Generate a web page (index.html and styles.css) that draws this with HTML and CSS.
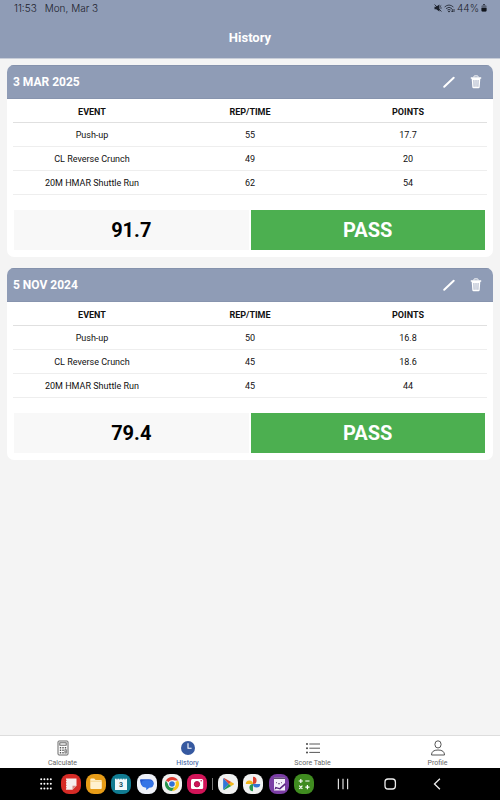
FILE: index.html
```html
<!DOCTYPE html>
<html lang="en">
<head>
<meta charset="utf-8">
<meta name="viewport" content="width=device-width, initial-scale=1">
<title>History</title>
<link rel="stylesheet" href="styles.css">
</head>
<body>
<svg class="defs" aria-hidden="true">
  <symbol id="pencil" viewBox="0 0 14 14"><path d="M2.2 11.8L11.7 2.7" stroke="#fff" stroke-width="2" stroke-linecap="round"/></symbol>
  <symbol id="trash" viewBox="0 0 14 14"><path d="M4.9 2.4V1.6q0-.7.7-.7h2.8q.7 0 .7.7v.8" fill="none" stroke="#fff" stroke-width="1"/><path d="M1.8 2.2h10.4v1.6H1.8zM2.7 3.8h8.6l-.6 8.2q-.1 1.2-1.2 1.2h-5q-1.1 0-1.2-1.2z" fill="#fff"/><path d="M4.9 5l.2 6.8M7 5v6.8M9.1 5l-.2 6.8" stroke="#8f9cb6" stroke-width=".8"/></symbol>
</svg>

<header class="app-header">
  <div class="status">
    <span>11:53</span><span>Mon, Mar 3</span>
    <span class="status-icons">
      <svg width="8" height="8" viewBox="0 0 8 8"><path d="M.5 2.7h1.7L5.4.4v7.2L2.2 5.3H.5z" fill="#1c212c"/><path d="M.6.5l6.8 7M6 2.6l1.2-1.1M6.2 4h1.5" stroke="#1c212c" stroke-width=".9"/></svg>
      <svg width="11" height="9" viewBox="0 0 11 9" fill="none" stroke="#1c212c" stroke-width=".8"><path d="M.6 3Q5 -.9 9.4 3M2 4.6q3-2.7 6 0M3.4 6.1q1.6-1.4 3.2 0"/><circle cx="5" cy="7.5" r=".5" fill="#1c212c"/><path d="M8.3 5v3M7.5 7.2l.8.8.7-.8M10 8V5"/></svg>
      <span>44%</span>
      <svg width="6" height="8" viewBox="0 0 6 8"><path d="M2 .3h2v1H2z" fill="#1c212c"/><rect x=".5" y="1.2" width="5" height="6.4" rx="1" fill="#5b6477"/><path d="M.5 4h5v2.6q0 1-1 1h-3q-1 0-1-1z" fill="#11151d"/></svg>
    </span>
  </div>
  <h1>History</h1>
</header>

<main class="history">
  <section class="card">
    <div class="card-head">
      <h2>3 MAR 2025</h2>
      <button type="button" aria-label="Edit"><svg class="icon"><use href="#pencil"/></svg></button>
      <button type="button" aria-label="Delete"><svg class="icon"><use href="#trash"/></svg></button>
    </div>
    <div class="card-body">
      <table>
        <thead><tr><th scope="col">EVENT</th><th scope="col">REP/TIME</th><th scope="col">POINTS</th></tr></thead>
        <tbody>
          <tr><td>Push-up</td><td>55</td><td>17.7</td></tr>
          <tr><td>CL Reverse Crunch</td><td>49</td><td>20</td></tr>
          <tr><td>20M HMAR Shuttle Run</td><td>62</td><td>54</td></tr>
        </tbody>
      </table>
      <div class="result"><div class="score">91.7</div><div class="verdict">PASS</div></div>
    </div>
  </section>

  <section class="card">
    <div class="card-head">
      <h2>5 NOV 2024</h2>
      <button type="button" aria-label="Edit"><svg class="icon"><use href="#pencil"/></svg></button>
      <button type="button" aria-label="Delete"><svg class="icon"><use href="#trash"/></svg></button>
    </div>
    <div class="card-body">
      <table>
        <thead><tr><th scope="col">EVENT</th><th scope="col">REP/TIME</th><th scope="col">POINTS</th></tr></thead>
        <tbody>
          <tr><td>Push-up</td><td>50</td><td>16.8</td></tr>
          <tr><td>CL Reverse Crunch</td><td>45</td><td>18.6</td></tr>
          <tr><td>20M HMAR Shuttle Run</td><td>45</td><td>44</td></tr>
        </tbody>
      </table>
      <div class="result"><div class="score">79.4</div><div class="verdict">PASS</div></div>
    </div>
  </section>
</main>

<nav class="tabs">
  <a href="#calculate">
    <svg viewBox="0 0 16 16" fill="none" stroke="#555" stroke-width=".9"><rect x="3" y="1" width="10" height="14" rx="1"/><rect x="4.8" y="2.8" width="6.4" height="2.4"/><path d="M4.8 7.7h1.4M7.3 7.7h1.4M9.8 7.7h1.4M4.8 10.2h1.4M7.3 10.2h1.4M4.8 12.7h1.4M7.3 12.7h1.4" stroke-width="1.4"/><rect x="10" y="9.8" width="1.2" height="3.2"/></svg>
    <span>Calculate</span>
  </a>
  <a href="#history" class="active" aria-current="page">
    <svg viewBox="0 0 16 16"><circle cx="8" cy="8" r="7" fill="#3659a0"/><path d="M8 3.3v5h3.6" fill="none" stroke="#fff" stroke-width="1.1"/></svg>
    <span>History</span>
  </a>
  <a href="#scores">
    <svg viewBox="0 0 16 16" fill="none" stroke="#444"><path d="M4.3 4H15M4.3 8.2H15M4.3 12.4H15" stroke-width=".9"/><g fill="#444" stroke="none"><circle cx="2" cy="4" r="1"/><circle cx="2" cy="8.2" r="1"/><circle cx="2" cy="12.4" r="1"/></g></svg>
    <span>Score Table</span>
  </a>
  <a href="#profile">
    <svg viewBox="0 0 16 16" fill="none" stroke="#444" stroke-width=".9"><ellipse cx="8" cy="4.4" rx="3.1" ry="3.6"/><path d="M1.5 15q0-5 6.5-5t6.5 5z" stroke-linejoin="round"/></svg>
    <span>Profile</span>
  </a>
</nav>

<footer class="dock">
  <div class="apps pinned">
    <button type="button" aria-label="All apps"><svg viewBox="0 0 20 20" fill="#fff"><circle cx="5.2" cy="5.2" r="1"/><circle cx="8.4" cy="5.2" r="1"/><circle cx="11.6" cy="5.2" r="1"/><circle cx="14.8" cy="5.2" r="1"/><circle cx="5.2" cy="9.8" r="1"/><circle cx="8.4" cy="9.8" r="1"/><circle cx="11.6" cy="9.8" r="1"/><circle cx="14.8" cy="9.8" r="1"/><circle cx="5.2" cy="14.4" r="1"/><circle cx="8.4" cy="14.4" r="1"/><circle cx="11.6" cy="14.4" r="1"/><circle cx="14.8" cy="14.4" r="1"/></svg></button>
    <button type="button" aria-label="Notes"><svg viewBox="0 0 20 20"><rect width="20" height="20" rx="8" fill="#d62b26"/><path d="M5 4.5h10.5v7.2l-4 4H5z" fill="#f5eeee"/><path d="M15.5 11.7h-4v4z" fill="#d98a87"/><path d="M4 6.3h1.8M4 8.8h1.8M4 11.3h1.8M4 13.8h1.8" stroke="#d62b26" stroke-width=".7"/></svg></button>
    <button type="button" aria-label="Files"><svg viewBox="0 0 20 20"><rect width="20" height="20" rx="8" fill="#e79c17"/><path d="M4.3 5.5q0-.9.9-.9h3l1.4 1.5h5.2q1 0 1 1v7q0 1-1 1H5.2q-.9 0-.9-1z" fill="#fff1cf"/><path d="M4.3 7.2h11.5" stroke="#f0c970" stroke-width=".7"/></svg></button>
    <button type="button" aria-label="Calendar"><svg viewBox="0 0 20 20"><rect width="20" height="20" rx="8" fill="#117c92"/><path d="M4 4.7h12v11.3H4z" fill="#f1f8fa"/><path d="M6 4v1.6M8.7 4v1.6M11.3 4v1.6M14 4v1.6" stroke="#117c92" stroke-width=".8"/><text x="10" y="13.3" text-anchor="middle" class="calendar-day">3</text></svg></button>
    <button type="button" aria-label="Messages"><svg viewBox="0 0 20 20"><rect width="20" height="20" rx="8" fill="#eef1f8"/><path d="M3 6q0-.8.9-.8H12q4.6.2 4.6 4.2 0 3.7-4.2 3.8H8.2Q3.6 12.8 3 6z" fill="#2358cf"/><path d="M4.4 9.2q.3-3 4.2-3h3.8q4 .1 4 3.7t-3.8 3.7l-2.8 2.2q-.6.3-.6-.4v-1.8q-4.9-.3-4.8-4.4z" fill="#3474e6"/></svg></button>
    <button type="button" aria-label="Chrome"><svg viewBox="0 0 20 20"><rect width="20" height="20" rx="8" fill="#f0f0f0"/><path d="M10 10L3.9 6.5A7 7 0 0 1 16.1 6.5H10z" fill="#de3b30"/><path d="M10 10l6.1-3.5A7 7 0 0 1 10 17l3-5.2z" fill="#f6c51c"/><path d="M10 10l3 1.8L10 17A7 7 0 0 1 3.9 6.5L7 11.8z" fill="#26924a"/><circle cx="10" cy="10" r="3.7" fill="#fff"/><circle cx="10" cy="10" r="2.8" fill="#2f70d8"/></svg></button>
    <button type="button" aria-label="Camera"><svg viewBox="0 0 20 20"><rect width="20" height="20" rx="8" fill="#d31458"/><rect x="4" y="5" width="12.2" height="10" rx="1.5" fill="#fff"/><circle cx="10" cy="10.2" r="2.7" fill="#d31458" stroke="#ac1850" stroke-width="1"/><circle cx="14.2" cy="6.8" r=".8" fill="#d31458"/></svg></button>
  </div>
  <div class="divider"></div>
  <div class="apps recent">
    <button type="button" aria-label="Play Store"><svg viewBox="0 0 20 20"><rect width="20" height="20" rx="8" fill="#f0f1f1"/><path d="M5.6 4.2L11 10l-5.4 5.8q-.5-.2-.5-1V5q0-.7.5-.8z" fill="#3277d8"/><path d="M5.6 4.2q.4-.2 1 .1l6.7 3.8L11 10.3z" fill="#e34635"/><path d="M5.6 15.8q.4.2 1-.1l6.7-3.8L11 9.7z" fill="#249b58"/><path d="M13.1 8l2.4 1.3q1 .7 0 1.4L13.1 12 11 10z" fill="#f3b91c"/></svg></button>
    <button type="button" aria-label="Photos"><svg viewBox="0 0 20 20"><rect width="20" height="20" rx="8" fill="#f0f1f1"/><path d="M10 2.8V10a3.6 3.6 0 0 0 0-7.2z" fill="#dc4032"/><path d="M17.2 10H10a3.6 3.6 0 0 0 7.2 0z" fill="#3274d3"/><path d="M10 17.2V10a3.6 3.6 0 0 0 0 7.2z" fill="#2b9650"/><path d="M2.8 10H10a3.6 3.6 0 0 0-7.2 0z" fill="#f0b51b"/></svg></button>
    <button type="button" aria-label="Journal"><svg viewBox="0 0 20 20"><rect width="20" height="20" rx="8" fill="#7b3da5"/><rect x="5" y="3.5" width="11" height="13" fill="#f5effa"/><path d="M5 4.2h11" stroke="#3b2352" stroke-width="1.2"/><path d="M7.5 8.2v1M12.5 8.2v1M9 9.5q1 1 2 0" fill="none" stroke="#4b2b62" stroke-width=".8"/><path d="M5.4 15.7l1-3 4.1 1.3 5.2-4.7 1.2 1.3-5.8 5-3.4-1.2z" fill="#5a247f"/></svg></button>
    <button type="button" aria-label="Calculator"><svg viewBox="0 0 20 20"><rect width="20" height="20" rx="8" fill="#408c20"/><path d="M4.7 7h4.2M6.8 4.9v4.2M11.3 7h4.2M5.2 11.6l3.2 3.2M8.4 11.6l-3.2 3.2M11.3 13.2h4.2M13.4 11.1v4.2" stroke="#fff" stroke-width="1.2"/></svg></button>
  </div>
  <div class="system">
    <button type="button" aria-label="Recents"><svg viewBox="0 0 20 20"><path d="M5.4 4.8v10.4M10 4.8v10.4M14.6 4.8v10.4" stroke="#ddd" stroke-width="1.2"/></svg></button>
    <button type="button" aria-label="Home"><svg viewBox="0 0 20 20"><rect x="5" y="5" width="10.4" height="10" rx="3" fill="none" stroke="#eee" stroke-width="1.3"/></svg></button>
    <button type="button" aria-label="Back"><svg viewBox="0 0 20 20"><path d="M12.9 4.8L7.5 10l5.4 5.2" fill="none" stroke="#eee" stroke-width="1.3"/></svg></button>
  </div>
</footer>
</body>
</html>
```
FILE: styles.css
```css
* { box-sizing: border-box; }

body {
  margin: 0;
  min-height: 100vh;
  display: flex;
  flex-direction: column;
  background: #f4f4f4;
  color: #111;
  font-family: Roboto, "Liberation Sans", sans-serif;
}

h1, h2 { margin: 0; }

button {
  padding: 0;
  border: 0;
  background: none;
  display: flex;
}

.defs { display: none; }

.app-header {
  background: #8f9cb6;
  color: #fff;
  padding-bottom: 10px;
  border-bottom: 1px solid #c9ced9;
}

.status {
  display: flex;
  align-items: center;
  gap: 8px;
  height: 16px;
  padding: 0 13px 0 14px;
  color: #1c212c;
  font: 300 10px/16px Inter, Roboto, sans-serif;
}

.status-icons {
  margin-left: auto;
  display: flex;
  align-items: center;
  gap: 2px;
}

h1 {
  padding-top: 12px;
  font-size: 13px;
  line-height: 20px;
  text-align: center;
}

.history {
  flex: 1;
  display: flex;
  flex-direction: column;
  gap: 11px;
  padding: 6px 7px 12px;
}

.card {
  background: #fff;
  border-radius: 7px;
  overflow: hidden;
}

.card-head {
  display: flex;
  align-items: center;
  gap: 13px;
  height: 34px;
  padding: 0 10px 0 6px;
  background: #8f9cb6;
  border-top: 1px solid #8592ac;
  border-bottom: 1px solid #8794ae;
}

h2 {
  flex: 1;
  color: #fff;
  font-size: 12px;
  line-height: 16px;
}

.icon { width: 14px; height: 14px; }

.card-body { padding: 0 6px 7px; }

table {
  width: 100%;
  table-layout: fixed;
  border-collapse: separate;
  border-spacing: 0;
  font-size: 9px;
  line-height: 12px;
  text-align: center;
}

th, td {
  height: 24px;
  padding: 0;
  border-bottom: 1px solid #eee;
}

th {
  padding-top: 3px;
  font-weight: 700;
  border-color: #e0e0e0;
}

.result {
  display: grid;
  grid-template-columns: 1fr 1fr;
  gap: 2px;
  margin: 15px 2px 0 1px;
  font-size: 20px;
  line-height: 40px;
  font-weight: 700;
  text-align: center;
}

.score { background: #f8f8f8; color: #000; }
.verdict { background: #4caf50; color: #fff; }

.tabs {
  display: grid;
  grid-template-columns: repeat(4, 1fr);
  border-top: 1px solid #ddd;
  background: #fff;
}

.tabs a {
  display: flex;
  flex-direction: column;
  align-items: center;
  gap: 2px;
  padding-top: 4px;
  color: #666;
  font-size: 7px;
  line-height: 10px;
  text-decoration: none;
}

.tabs svg { width: 16px; height: 16px; }
.tabs .active { color: #3659a0; }

.dock {
  display: flex;
  align-items: center;
  height: 32px;
  padding-left: 36px;
  background: #000;
}

.dock svg { width: 20px; height: 20px; }

.apps { display: flex; justify-content: space-between; }
.pinned { width: 171px; }
.recent { width: 96px; }

.divider {
  width: 1px;
  height: 12px;
  margin: 0 5px;
  background: #777;
}

.system { display: flex; gap: 27px; margin-left: 19px; }

.calendar-day { font: 700 7px Roboto, sans-serif; fill: #15505e; }
```
